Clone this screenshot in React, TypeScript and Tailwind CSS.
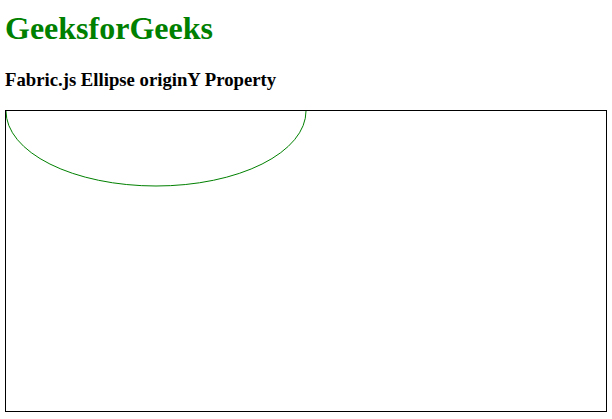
export default function App() {
  return (
    <div className="min-h-screen bg-white pl-[5px] pt-[10px] font-['Liberation_Serif',serif] text-black">
      <h1 className="text-[32px] font-bold leading-[37px] text-[#008000]">GeeksforGeeks</h1>
      <h3 className="mt-[22px] text-[18.72px] font-bold leading-[22px]">Fabric.js Ellipse originY Property</h3>
      <div className="mt-[19px] h-[302px] w-[602px] border border-black bg-white">
        <svg width="600" height="300" viewBox="0 0 600 300" className="block">
          <ellipse cx="150" cy="0" rx="150" ry="75" fill="none" stroke="#008000" strokeWidth="1" />
        </svg>
      </div>
    </div>
  );
}
